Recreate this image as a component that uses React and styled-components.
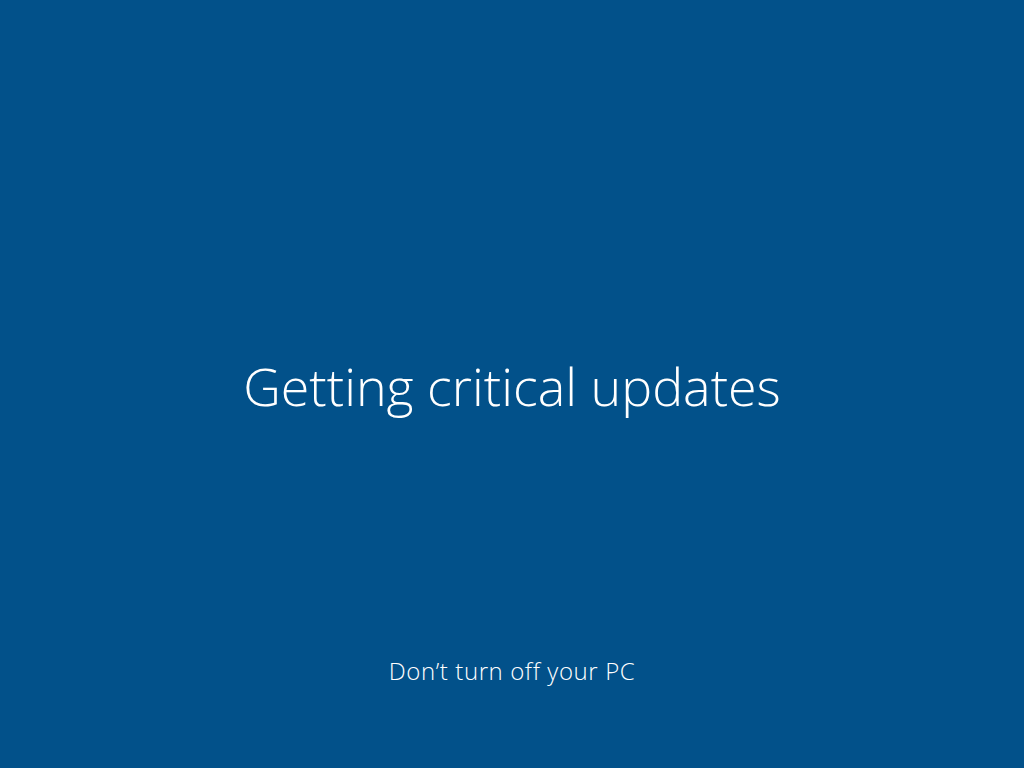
import React from 'react';
import styled, { createGlobalStyle } from 'styled-components';

const GlobalStyle = createGlobalStyle`
  html, body {
    margin: 0;
    padding: 0;
    background: #02518a;
  }
`;

const Screen = styled.div`
  width: 100%;
  height: 100vh;
  background: #02518a;
  color: #ffffff;
  display: flex;
  flex-direction: column;
  align-items: center;
  font-family: "Open Sans", "Noto Sans", sans-serif;
  overflow: hidden;
`;

const Title = styled.h1`
  margin: 353px 0 0;
  font-size: 52px;
  font-weight: 300;
  line-height: 66px;
  letter-spacing: 0;
`;

const Footer = styled.p`
  margin: auto 0 0;
  padding-bottom: 82px;
  font-size: 24px;
  font-weight: 300;
  line-height: 30px;
  letter-spacing: 0.6px;
`;

function App() {
  return (
    <>
      <GlobalStyle />
      <Screen>
        <Title>Getting critical updates</Title>
        <Footer>Don’t turn off your PC</Footer>
      </Screen>
    </>
  );
}

export default App;
